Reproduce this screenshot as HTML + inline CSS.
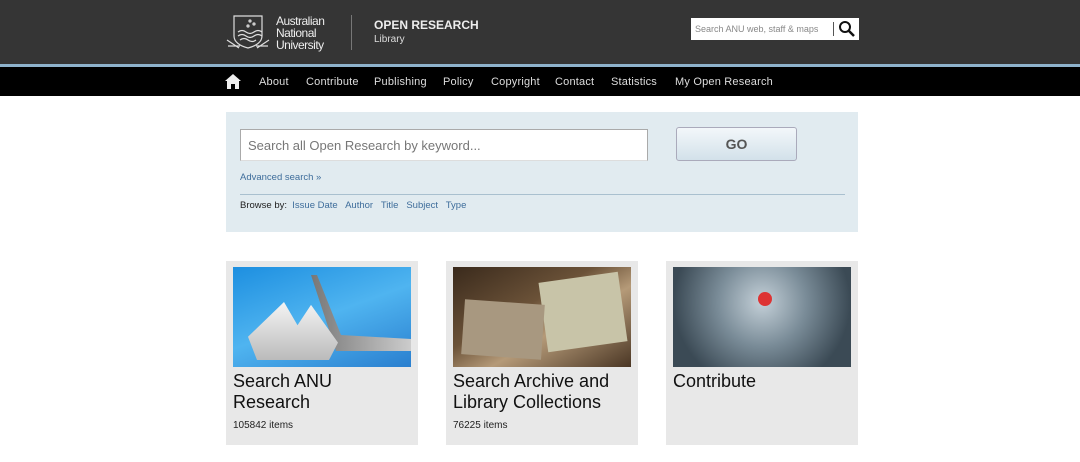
<!DOCTYPE html>
<html><head><style>
*{margin:0;padding:0;box-sizing:border-box}
body{width:1080px;height:462px;background:#fff;font-family:"Liberation Sans",sans-serif;position:relative;overflow:hidden}
.hdr{position:absolute;left:0;top:0;width:1080px;height:64px;background:#353535}
.line{position:absolute;left:0;top:64px;width:1080px;height:3px;background:#8fb3cc}
.nav{position:absolute;left:0;top:67px;width:1080px;height:29px;background:#000}
.nav span{position:absolute;top:9px;color:#ddd;font-size:11px;letter-spacing:.2px}
.a{position:absolute}
.card{position:absolute;top:261px;width:192px;height:184px;background:#e8e8e8}
.card .img{position:absolute;left:7px;top:6px;width:178px;height:100px;overflow:hidden}
.card h3{position:absolute;left:7px;top:110px;font-weight:normal;font-size:18px;line-height:21px;color:#111}
.card p{position:absolute;left:7px;top:159px;font-size:10px;color:#222}
</style></head><body>
<div class="hdr"></div>
<svg class="a" style="left:226px;top:14px" width="44" height="38" viewBox="0 0 44 38" fill="none" stroke="#ddd" stroke-width="1.2">
<path d="M8 2h28v20c0 6-6 10-14 12C14 32 8 28 8 22z"/><path d="M12 18q4-3 8 0t8 0t8 0M12 22q4-3 8 0t8 0t8 0M14 26q4-3 8 0t8 0"/><circle cx="24" cy="7" r="1"/><circle cx="28" cy="10" r="1"/><circle cx="22" cy="12" r="1"/>
<path d="M1 26q6 4 12 8M43 26q-6 4-12 8M2 32h12M30 32h12"/></svg>
<div class="a" style="left:276px;top:15px;color:#eee;font-size:12px;line-height:12px;letter-spacing:-.5px">Australian<br>National<br>University</div>
<div class="a" style="left:351px;top:15px;width:1px;height:35px;background:#777"></div>
<div class="a" style="left:374px;top:18px;color:#eee;font-size:12px;font-weight:bold;letter-spacing:0">OPEN RESEARCH</div>
<div class="a" style="left:374px;top:34px;color:#ddd;font-size:10px">Library</div>
<div class="a" style="left:691px;top:18px;width:168px;height:22px;background:#fff"></div>
<div class="a" style="left:695px;top:24px;color:#888;font-size:9px">Search ANU web, staff &amp; maps</div>
<div class="a" style="left:833px;top:22px;width:1px;height:14px;background:#555"></div>
<svg class="a" style="left:838px;top:20px" width="18" height="18" viewBox="0 0 18 18"><circle cx="7" cy="7" r="5" fill="none" stroke="#111" stroke-width="2"/><path d="M11 11l5 5" stroke="#111" stroke-width="2.5"/></svg>
<div class="line"></div>
<div class="nav">
<svg class="a" style="left:225px;top:7px" width="16" height="15" viewBox="0 0 16 15"><path d="M8 0L0 7h2v8h12V7h2z" fill="#eee"/><rect x="6" y="10" width="4" height="5" fill="#000"/></svg>
<span style="left:259px">About</span><span style="left:306px">Contribute</span><span style="left:374px">Publishing</span><span style="left:443px">Policy</span><span style="left:491px">Copyright</span><span style="left:555px">Contact</span><span style="left:611px">Statistics</span><span style="left:675px">My Open Research</span>
</div>
<div class="a" style="left:226px;top:112px;width:632px;height:120px;background:#e1ebf0"></div>
<div class="a" style="left:240px;top:129px;width:408px;height:32px;background:#fff;border:1px solid #aaa;border-bottom-color:#ddd"></div>
<div class="a" style="left:248px;top:138px;color:#777;font-size:13px">Search all Open Research by keyword...</div>
<div class="a" style="left:676px;top:127px;width:121px;height:34px;border:1px solid #aab;border-radius:3px;background:linear-gradient(#f3f7fa,#d3e1ea);color:#555;font-size:14px;font-weight:bold;text-align:center;line-height:33px">GO</div>
<div class="a" style="left:240px;top:172px;color:#3e6d9b;font-size:9.5px">Advanced search »</div>
<div class="a" style="left:240px;top:194px;width:605px;height:1px;background:#a9c0cf"></div>
<div class="a" style="left:240px;top:200px;font-size:9.5px;color:#222">Browse by: <span style="color:#3e6d9b">&nbsp;Issue Date &nbsp; Author &nbsp; Title &nbsp; Subject &nbsp; Type</span></div>
<div class="card" style="left:226px"><div class="img" style="background:linear-gradient(160deg,#1d8fe0,#4fb4f0 50%,#2a7fcf)"><div style="position:absolute;left:78px;top:8px;width:100px;height:80px;background:linear-gradient(90deg,#777,#ccc);clip-path:polygon(0 0,6% 0,30% 75%,100% 80%,100% 95%,25% 95%)"></div><div style="position:absolute;left:15px;top:35px;width:90px;height:58px;background:linear-gradient(#f4f4f4,#bbb);clip-path:polygon(0 60%,40% 0,55% 40%,70% 5%,100% 70%,90% 100%,10% 100%)"></div></div><h3>Search ANU<br>Research</h3><p>105842 items</p></div>
<div class="card" style="left:446px"><div class="img" style="background:linear-gradient(150deg,#3a2a1c,#6b5238 40%,#b59a78 60%,#4a3624)"><div style="position:absolute;left:90px;top:10px;width:80px;height:70px;background:#c8c4a8;transform:rotate(-8deg)"></div><div style="position:absolute;left:10px;top:35px;width:80px;height:55px;background:#a89880;transform:rotate(4deg)"></div></div><h3>Search Archive and<br>Library Collections</h3><p>76225 items</p></div>
<div class="card" style="left:666px"><div class="img" style="background:radial-gradient(circle at 50% 35%,#c4d0d8,#7a8c98 40%,#3b4a55 80%)"><div style="position:absolute;left:85px;top:25px;width:14px;height:14px;border-radius:50%;background:#d33"></div></div><h3>Contribute</h3></div>
</body></html>
